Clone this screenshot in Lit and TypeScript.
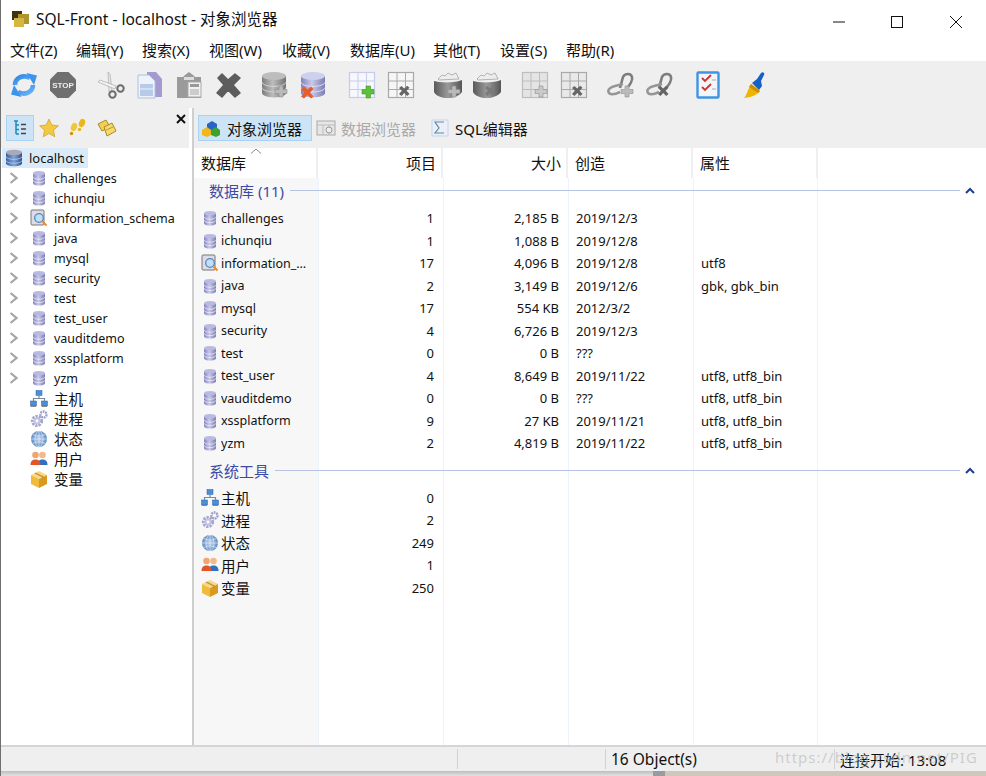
import {LitElement, html, svg, css} from 'lit';
import {customElement} from 'lit/decorators.js';

const plus = (c = '#b9b9b9') =>
  svg`<path d="M18 15h4v3.5h4v4h-4V26h-4v-3.5h-4v-4h4z" fill=${c} stroke="#8f8f8f" stroke-width=".6"/>`;
const cross = (c = '#666') =>
  svg`<path d="M12 17l2.5-2 2.7 2.6 3-2.8 2.3 2-2.9 3 2.9 3.2-2.3 2-3-3-2.7 3-2.5-2 2.9-3.2z" fill=${c}/>`;

const icon = (size: number, body: unknown, box = 28) =>
  html`<svg width=${size} height=${size} viewBox="0 0 ${box} ${box}">${body}</svg>`;

const cylinder = (fill: string, top: string, line: string) => svg`
  <path d="M1 5v17c0 2.400 5.400 4.400 12 4.400s12-2 12-4.400V5z" fill=${fill}/>
  <path d="M1 11c0 2.400 5.400 4.400 12 4.400s12-2 12-4.400M1 16.500c0 2.400 5.400 4.400 12 4.400s12-2 12-4.400" fill="none" stroke=${line} stroke-width=".9"/>
  <ellipse cx="13" cy="5" rx="12" ry="4" fill=${top}/>`;

const folderBody = svg`
  <path d="M4 8l4-4 3 1 3-3 4 2 4-2 3 6-20 1z" fill="#ededed" stroke="#999" stroke-width=".7"/>
  <path d="M0 10c6 2 22 2 28-1v12c-3 4-9 6-14 6-6 0-12-2-14-6z" fill="url(#gDark)"/>`;

const grid = (fill: string, stroke: string, extra: unknown) => svg`
  <rect x="1.500" y="1.500" width="25" height="25" fill=${fill} stroke=${stroke} stroke-width="1.200"/>
  <path d="M10 1.500v25M18.500 1.500v25M1.500 10h25M1.500 18.500h25" stroke=${stroke} stroke-width="1"/>${extra}`;

const link = (extra: unknown) => svg`
  <path d="M13 17L16 6c2-4 8-4 9 0 1 3-2 8-5 11" fill="none" stroke="#7d7d7d" stroke-width="2.600"/>
  <path d="M16 13l-8 2c-5 1-8 4-6 7 2 2 7 1 11-1" fill="none" stroke="#969696" stroke-width="2.600"/>${extra}`;

const toolbarGroups = [
  [
    icon(28, svg`
      <path d="M5 14C5 7 13 3 20 7" fill="none" stroke="url(#gBlue)" stroke-width="4.600"/>
      <path d="M16.500 2l10.500 2.500-3 9.500z" fill="#3d94ea"/>
      <path d="M23 14c0 7-8 11-15 7" fill="none" stroke="url(#gBlue)" stroke-width="4.600"/>
      <path d="M11.500 26L1 23.500l3-9.500z" fill="#3d94ea"/>`),
    icon(28, svg`
      <path d="M8.500 1h11L27 8.500v11L19.500 27h-11L1 19.500v-11z" fill="#6f6f6f"/>
      <text x="14" y="17" text-anchor="middle" font-family="Liberation Sans" font-weight="700" font-size="8" fill="#eee">STOP</text>`),
  ],
  [
    icon(28, svg`
      <path d="M11 1l2 2 2 17-3 1z" fill="#e8e8e8" stroke="#aaa" stroke-width=".7"/>
      <path d="M1 11l2-2 16 6-1 3z" fill="#f2f2f2" stroke="#aaa" stroke-width=".7"/>
      <circle cx="15.500" cy="23.500" r="3.200" fill="none" stroke="#6c6c6c" stroke-width="2"/>
      <circle cx="23.500" cy="17.500" r="3.200" fill="none" stroke="#6c6c6c" stroke-width="2"/>`),
    icon(28, svg`
      <path d="M11 1h9l6 7v18H11z" fill="#a59ad0"/>
      <path d="M2 4h11l6 6v17H2z" fill="#eef3fb" stroke="#aebfe0"/>
      <rect x="4" y="13" width="13" height="12" fill="#b7cbe9"/>
      <path d="M4 18h13" stroke="#eef3fb"/>`),
    icon(28, svg`
      <path d="M2 6h6l2-2h0l4-3 4 3 2 2h6v21H2z" fill="#9a9a9a"/>
      <path d="M9 6h10v3H9z" fill="#ddd"/>
      <rect x="13" y="11" width="13" height="15" fill="#f0f0f0" stroke="#aaa"/>
      <rect x="15" y="13" width="9" height="3" fill="#999"/>
      <rect x="15" y="18" width="9" height="6" fill="#ccc"/>`),
    icon(28, svg`
      <path d="M4 7l4-4 6 6 7-6 5 4-7 7 7 8-5 4-7-7-6 7-5-4 7-8z" fill="#5d5d5d" stroke="#5d5d5d" stroke-width="1.500" stroke-linejoin="round"/>`),
  ],
  [
    icon(28, svg`${cylinder('url(#gGrey)', '#bdbdbd', '#d8d8d8')}${plus()}`),
    icon(28, svg`${cylinder('url(#gPurple)', '#cfcfee', '#e3e3f6')}
      <path d="M1 18l3-2.500 3.500 3 3.500-3 2.500 2.500-3.500 3.500 3.500 4-2.500 2-3.500-3.500-3.500 3.500-3-2 3.500-4z" fill="#ee5a24"/>`),
  ],
  [
    icon(28, grid('#f6f7ff', '#c9cce8', svg`<path d="M18 15h4.500v3.500H26v4.500h-3.500V27H18v-4h-4v-4.500h4z" fill="#5cc13a" stroke="#3f9a25" stroke-width=".6"/>`)),
    icon(28, grid('#f6f6f6', '#a9a9a9', cross())),
  ],
  [
    icon(28, svg`${folderBody}${plus()}`),
    icon(28, svg`${folderBody}${cross('#7a7a7a')}`),
  ],
  [
    icon(28, grid('#e4e4e4', '#bdbdbd', plus('#c9c9c9'))),
    icon(28, grid('#e9e9e9', '#a9a9a9', cross())),
  ],
  [icon(28, link(plus('#bbb'))), icon(28, link(cross()))],
  [
    icon(28, svg`
      <rect x="3.500" y="1.500" width="21" height="25" rx="1" fill="#f2f6fb" stroke="#3f95e0" stroke-width="2.400"/>
      <path d="M8 7l3 3 6-6M8 16l3 3 6-6" fill="none" stroke="#d2322a" stroke-width="1.800"/>
      <path d="M18 9h4M18 18h4" stroke="#aaa"/>`),
  ],
  [
    icon(28, svg`
      <path d="M10 13l9 7c-2 3-7 6-16 7 3-3 4-9 7-14z" fill="#f0b400"/>
      <path d="M10 13l9 7-2 2-9-6z" fill="#cc8f00"/>
      <path d="M11 12l5-4 4-6c2-2 4 0 3 2l-3 6 1 5-3 4z" fill="#1560c4"/>`),
  ],
];

const dbSmall = icon(16, svg`
  <path d="M2 3.200v10c0 1.300 2.700 2.400 6 2.400s6-1.100 6-2.400v-10z" fill="url(#gPurple)"/>
  <path d="M2 6.800c0 1.300 2.700 2.400 6 2.400s6-1.100 6-2.400M2 10.200c0 1.300 2.700 2.400 6 2.400s6-1.100 6-2.400" fill="none" stroke="#eeeefa" stroke-width=".8"/>
  <ellipse cx="8" cy="3.200" rx="6" ry="2.300" fill="#b9b9e2"/>`, 16);

const schema = icon(18, svg`
  <rect x="1" y="1" width="13" height="15" rx="1" fill="#dcdce8" stroke="#777"/>
  <circle cx="9" cy="9" r="4.300" fill="#bfe0f7" stroke="#5a86b8" stroke-width="1.300"/>
  <path d="M12.500 12.500l4 4" stroke="#ef8a2c" stroke-width="2"/>`, 18);

const host = icon(18, svg`
  <rect x="6" y="0.500" width="6" height="5" fill="#4a90d9" stroke="#2a62a8" stroke-width=".5"/>
  <rect x="0.500" y="11" width="6" height="5" fill="#4a90d9" stroke="#2a62a8" stroke-width=".5"/>
  <rect x="11.500" y="11" width="6" height="5" fill="#4a90d9" stroke="#2a62a8" stroke-width=".5"/>
  <path d="M9 5.500v3M3.500 11V8.500h11V11" fill="none" stroke="#7a8a9a" stroke-width="1.200"/>
  <path d="M1 16.500h5M12 16.500h5" stroke="#888"/>`, 18);

const gears = icon(18, svg`
  <circle cx="7" cy="11" r="4.500" fill="none" stroke="#a5a5cf" stroke-width="3.200" stroke-dasharray="2.200 1"/>
  <circle cx="7" cy="11" r="3.500" fill="#c5c5e2"/>
  <circle cx="7" cy="11" r="1.400" fill="#fff"/>
  <circle cx="13.500" cy="4.500" r="3" fill="none" stroke="#9d9dc7" stroke-width="2.400" stroke-dasharray="1.800 .8"/>
  <circle cx="13.500" cy="4.500" r="1.100" fill="#fff"/>`, 18);

const globe = icon(18, svg`
  <circle cx="9" cy="9" r="8" fill="url(#gGlobe)"/>
  <path d="M1 9h16M9 1v16M3 4.500c4 2 8 2 12 0M3 13.500c4-2 8-2 12 0" fill="none" stroke="#dbe7f6" stroke-width=".7"/>
  <ellipse cx="9" cy="9" rx="4" ry="8" fill="none" stroke="#dbe7f6" stroke-width=".7"/>`, 18);

const users = icon(18, svg`
  <circle cx="12.500" cy="5" r="3.300" fill="#f3b98a"/>
  <path d="M7.500 15c0-4 2-5.500 5-5.500s5 1.500 5 5.500z" fill="#2f6fc0"/>
  <circle cx="5.500" cy="5" r="3.300" fill="#f0a670"/>
  <path d="M.5 15c0-4 2-5.500 5-5.500s5 1.500 5 5.500z" fill="#e0552a"/>`, 18);

const box = icon(18, svg`
  <path d="M1 5l8-4 8 4-8 4z" fill="#f5d88a"/>
  <path d="M1 5l8 4v9l-8-4z" fill="#eebb3c"/>
  <path d="M17 5l-8 4v9l8-4z" fill="#d99a1f"/>
  <path d="M5 3l8 4v2" fill="none" stroke="#c78f1e" stroke-width="1.300"/>`, 18);

const chevron = html`<svg class="chev" width="9" height="12" viewBox="0 0 9 12"><path d="M1.500 1L7.500 6l-6 5" fill="none" stroke="#a6a6a6" stroke-width="2.200"/></svg>`;
const collapse = html`<svg class="collapse" width="10" height="7" viewBox="0 0 10 7"><path d="M1 6l4-4 4 4" fill="none" stroke="#1c3f94" stroke-width="2"/></svg>`;

const databases = [
  ['challenges', '1', '2,185 B', '2019/12/3', ''],
  ['ichunqiu', '1', '1,088 B', '2019/12/8', ''],
  ['information_schema', '17', '4,096 B', '2019/12/8', 'utf8'],
  ['java', '2', '3,149 B', '2019/12/6', 'gbk, gbk_bin'],
  ['mysql', '17', '554 KB', '2012/3/2', ''],
  ['security', '4', '6,726 B', '2019/12/3', ''],
  ['test', '0', '0 B', '???', ''],
  ['test_user', '4', '8,649 B', '2019/11/22', 'utf8, utf8_bin'],
  ['vauditdemo', '0', '0 B', '???', 'utf8, utf8_bin'],
  ['xssplatform', '9', '27 KB', '2019/11/21', 'utf8, utf8_bin'],
  ['yzm', '2', '4,819 B', '2019/11/22', 'utf8, utf8_bin'],
];

const tools: [string, unknown, string][] = [
  ['主机', host, '0'],
  ['进程', gears, '2'],
  ['状态', globe, '249'],
  ['用户', users, '1'],
  ['变量', box, '250'],
];

const menus = ['文件(Z)', '编辑(Y)', '搜索(X)', '视图(W)', '收藏(V)', '数据库(U)', '其他(T)', '设置(S)', '帮助(R)'];

const dbIcon = (name: string) => (name === 'information_schema' ? schema : dbSmall);

@customElement('app-root')
export class AppRoot extends LitElement {
  static styles = css`
    :host {
      display: flex;
      flex-direction: column;
      height: 776px;
      width: 986px;
      box-sizing: border-box;
      border-left: 1px solid #6f6f6f;
      background: #fff;
      color: #111;
      font-family: 'Noto Sans', 'Noto Sans CJK SC', sans-serif;
      font-size: 13px;
      overflow: hidden;
      position: relative;
    }
    svg {
      display: block;
      flex: none;
    }
    .defs {
      height: 0;
      width: 0;
    }
    .titlebar {
      align-items: center;
      display: flex;
      flex: none;
      height: 37px;
      padding-left: 10px;
    }
    .title {
      font-size: 15.500px;
      margin-left: 5px;
    }
    .winctl {
      display: flex;
      margin-left: auto;
      margin-right: 1px;
      margin-top: 6px;
    }
    .winctl span {
      align-items: center;
      display: flex;
      height: 31px;
      justify-content: center;
      width: 58.500px;
    }
    .menu {
      align-items: center;
      display: flex;
      flex: none;
      font-size: 15px;
      height: 24px;
      padding-left: 9px;
    }
    .menu span {
      width: 66px;
    }
    .menu span:nth-child(3),
    .menu span:nth-child(7) {
      width: 67px;
    }
    .menu span:nth-child(4) {
      width: 73px;
    }
    .menu span:nth-child(5) {
      width: 68px;
    }
    .menu span:nth-child(6) {
      width: 83px;
    }
    .toolbar {
      align-items: center;
      background: #efefef;
      display: flex;
      flex: none;
      gap: 8.500px;
      height: 47px;
      padding-left: 3.500px;
    }
    .group {
      display: flex;
    }
    .tool {
      display: flex;
      filter: blur(0.35px);
      justify-content: center;
      width: 39px;
    }
    .main {
      display: flex;
      flex: 1;
      min-height: 0;
    }
    .left {
      display: flex;
      flex: none;
      flex-direction: column;
      font-size: 12.500px;
      width: 191px;
    }
    .strip {
      align-items: center;
      background: #efefef;
      display: flex;
      flex: none;
      height: 40px;
      margin-right: 3px;
      padding-left: 5px;
    }
    .strip-btn {
      align-items: center;
      display: flex;
      height: 26px;
      justify-content: center;
      margin-right: 1px;
      width: 28px;
    }
    .strip-btn.on,
    .tab.on {
      background: #cde4f7;
      box-shadow: inset 0 0 0 1px #a8d2f2;
    }
    .strip-close {
      align-self: flex-start;
      margin-left: auto;
      margin-right: 3px;
      margin-top: 6px;
    }
    .tree {
      flex: 1;
    }
    .root {
      align-items: center;
      background: #d9ebf9;
      display: flex;
      font-size: 13px;
      gap: 6px;
      height: 20px;
      margin-left: 1px;
      padding-left: 3px;
      width: 83px;
    }
    .node {
      align-items: center;
      display: grid;
      grid-template-columns: 28px 20px 1fr;
      height: 20px;
    }
    .chev {
      margin-left: 8px;
    }
    .node-icon {
      grid-column: 2;
      justify-self: center;
    }
    .node-label {
      grid-column: 3;
      padding-left: 5px;
      white-space: nowrap;
    }
    .cjk {
      font-size: 14.500px;
    }
    .splitter {
      background: #fff;
      border-left: 2px solid #cfcfcf;
      flex: none;
      width: 0;
    }
    .right {
      display: flex;
      flex: 1;
      flex-direction: column;
      min-width: 0;
    }
    .tabs {
      align-items: center;
      background: #efefef;
      display: flex;
      flex: none;
      font-size: 15px;
      height: 40px;
      padding-left: 4px;
    }
    .tab {
      align-items: center;
      display: flex;
      gap: 5px;
      height: 26px;
      padding: 0 8px 0 3px;
    }
    .tab.on {
      box-sizing: border-box;
      gap: 6px;
      margin-right: 1px;
      width: 114px;
    }
    .tab.off {
      color: #a9a9a9;
      margin-right: 3px;
    }
    .head,
    .row {
      display: grid;
      grid-template-columns: 124px 125px 125px 125px 125px 1fr;
    }
    .head {
      align-items: center;
      flex: none;
      font-size: 15px;
      height: 30px;
    }
    .head div {
      border-right: 2px solid #efefef;
      box-sizing: border-box;
      height: 100%;
      line-height: 30px;
      padding: 0 5px 0 7px;
      position: relative;
    }
    .head div:last-child {
      border-right: none;
    }
    .sort {
      left: 56px;
      position: absolute;
      top: 0;
    }
    .num {
      padding-right: 9px;
      text-align: right;
    }
    .head .num {
      padding-right: 5px;
    }
    .body {
      background:
        linear-gradient(90deg, #f7f7f7 124px, transparent 124px),
        linear-gradient(90deg, transparent 124px, #edf3fb 124px, #edf3fb 125px, transparent 125px),
        linear-gradient(90deg, transparent 249px, #edf3fb 249px, #edf3fb 250px, transparent 250px),
        linear-gradient(90deg, transparent 374px, #edf3fb 374px, #edf3fb 375px, transparent 375px),
        linear-gradient(90deg, transparent 499px, #edf3fb 499px, #edf3fb 500px, transparent 500px),
        linear-gradient(90deg, transparent 623px, #edf3fb 623px, #edf3fb 624px, transparent 624px);
      flex: 1;
      min-height: 0;
      overflow: hidden;
    }
    .band {
      align-items: center;
      color: #3d4ba6;
      display: flex;
      font-size: 15px;
      height: 24px;
      padding-left: 15px;
    }
    .band-line {
      background: #b4c4e2;
      flex: 1;
      height: 1px;
      margin: 0 5px 0 6px;
    }
    .collapse {
      margin-right: 11px;
    }
    .rows {
      padding-bottom: 4px;
      padding-top: 5px;
    }
    .rows.sys {
      padding-top: 4px;
    }
    .row {
      align-items: center;
      height: 22.500px;
      white-space: nowrap;
    }
    .cell {
      min-width: 0;
    }
    .name {
      align-items: center;
      display: flex;
      font-size: 12.500px;
      padding-left: 6px;
    }
    .name-icon {
      align-items: center;
      display: flex;
      flex: none;
      justify-content: center;
      margin-right: 1px;
      width: 20px;
    }
    .name span {
      overflow: hidden;
      padding-right: 6px;
      text-overflow: ellipsis;
    }
    .date,
    .attr {
      padding-left: 8px;
    }
    .status {
      background: #efefef;
      border-top: 2px solid #d5d5d5;
      display: flex;
      flex: none;
      font-size: 15.500px;
      height: 24px;
      position: relative;
    }
    .cell-s {
      align-items: center;
      border-right: 1px solid #d2d2d2;
      box-sizing: border-box;
      display: flex;
      margin: 2px 0;
      padding-left: 5px;
    }
    .cell-s.w1 {
      width: 457px;
    }
    .cell-s.w2 {
      width: 148px;
    }
    .cell-s.w3 {
      width: 229px;
    }
    .cell-s.conn {
      border-right: none;
      font-size: 15px;
    }
    .watermark {
      color: rgba(190, 190, 190, 0.7);
      font-size: 15px;
      left: 774px;
      letter-spacing: 1px;
      position: absolute;
      top: 0;
      white-space: nowrap;
    }
    .shadow {
      display: flex;
      flex: none;
      height: 5px;
    }
    .shadow i {
      display: block;
    }
    .shadow .a {
      background: linear-gradient(#bdbdbd, #e2e2e2);
      width: 652px;
    }
    .shadow .b {
      background: #9b9b9b;
      width: 12px;
    }
    .shadow .c {
      background: #cfc8ba;
      flex: 1;
    }
  `;

  render() {
    return html`
      <svg class="defs">
        <defs>
          <linearGradient id="gPurple"><stop offset="0" stop-color="#8383bd"/><stop offset=".45" stop-color="#c9c9ea"/><stop offset="1" stop-color="#7c7cb2"/></linearGradient>
          <linearGradient id="gGrey"><stop offset="0" stop-color="#7d7d7d"/><stop offset=".45" stop-color="#bcbcbc"/><stop offset="1" stop-color="#727272"/></linearGradient>
          <linearGradient id="gDark"><stop offset="0" stop-color="#5a5a5a"/><stop offset=".5" stop-color="#9a9a9a"/><stop offset="1" stop-color="#555"/></linearGradient>
          <linearGradient id="gBlue" x2="1" y2="1"><stop offset="0" stop-color="#2f86e6"/><stop offset="1" stop-color="#6db7f5"/></linearGradient>
          <radialGradient id="gGlobe"><stop offset="0" stop-color="#c2d6ee"/><stop offset="1" stop-color="#5e8dc6"/></radialGradient>
          <linearGradient id="gDbBlue"><stop offset="0" stop-color="#3b5f9e"/><stop offset=".5" stop-color="#7fa4d8"/><stop offset="1" stop-color="#2f4f88"/></linearGradient>
        </defs>
      </svg>
      <div class="titlebar">
        ${icon(20, svg`
          <rect x="1" y="2" width="10" height="9" fill="#3f3410"/>
          <rect x="7" y="5" width="11" height="10" fill="#b0952b"/>
          <rect x="3" y="9" width="10" height="9" fill="#d4b640"/>`, 20)}
        <span class="title">SQL-Front - localhost - 对象浏览器</span>
        <div class="winctl">
          <span><svg width="12" height="2" viewBox="0 0 12 2"><path d="M0 1h12" stroke="#111"/></svg></span>
          <span><svg width="12" height="12" viewBox="0 0 12 12"><rect x=".5" y=".5" width="11" height="11" fill="none" stroke="#111"/></svg></span>
          <span><svg width="12" height="12" viewBox="0 0 12 12"><path d="M0 0l12 12M12 0L0 12" stroke="#111"/></svg></span>
        </div>
      </div>
      <div class="menu">${menus.map(m => html`<span>${m}</span>`)}</div>
      <div class="toolbar">
        ${toolbarGroups.map(
          g => html`<div class="group">${g.map(i => html`<div class="tool">${i}</div>`)}</div>`
        )}
      </div>
      <div class="main">
        <div class="left">
          <div class="strip">
            <div class="strip-btn on">
              ${icon(18, svg`<path d="M3 2h4M5 2v13M5 6h3M5 10.500h3M5 15h3" fill="none" stroke="#1f8bb8" stroke-width="1.500"/><path d="M10 5.500h5M10 10h5M10 14.500h5" stroke="#444" stroke-width="1.500"/>`, 18)}
            </div>
            <div class="strip-btn">
              ${icon(20, svg`<path d="M10 1l2.800 6 6.600.8-4.900 4.500 1.300 6.500L10 15.500 4.200 18.800l1.300-6.500L.6 7.800 7.200 7z" fill="#f5c842" stroke="#c9a227" stroke-width=".7"/>`, 20)}
            </div>
            <div class="strip-btn">
              ${icon(20, svg`<ellipse cx="14" cy="5" rx="3" ry="4.200" fill="#e8b61e" transform="rotate(20 14 5)"/><circle cx="11.500" cy="11.500" r="1.700" fill="#e8b61e"/><ellipse cx="6" cy="9" rx="3" ry="4.200" fill="#f0c63a" transform="rotate(20 6 9)"/><circle cx="3.500" cy="15.500" r="1.700" fill="#c9960f"/>`, 20)}
            </div>
            <div class="strip-btn">
              ${icon(20, svg`<path d="M1 6l8-4 4 7-8 4z" fill="#f2cf56" stroke="#a37f14" stroke-width=".9"/><path d="M7 9l8-4 4 8-9 5z" fill="#f7da6e" stroke="#a37f14" stroke-width=".9"/><path d="M9 12l7-3" stroke="#a37f14" stroke-width=".7"/>`, 20)}
            </div>
            <svg class="strip-close" width="10" height="10" viewBox="0 0 10 10"><path d="M1 1l8 8M9 1l-8 8" stroke="#111" stroke-width="2"/></svg>
          </div>
          <div class="tree">
            <div class="root">
              ${icon(18, svg`
                <path d="M1 3.500v11c0 1.500 3.600 2.800 8 2.800s8-1.300 8-2.800v-11z" fill="url(#gDbBlue)"/>
                <path d="M1 7.500c0 1.500 3.600 2.800 8 2.800s8-1.300 8-2.800M1 11.500c0 1.500 3.600 2.800 8 2.800s8-1.300 8-2.800" fill="none" stroke="#bcd3f0" stroke-width=".8"/>
                <ellipse cx="9" cy="3.500" rx="8" ry="2.700" fill="#a9a9b8"/>`, 18)}
              <span>localhost</span>
            </div>
            ${databases.map(
              d => html`<div class="node">
                ${chevron}
                <div class="node-icon">${dbIcon(d[0])}</div>
                <div class="node-label">${d[0]}</div>
              </div>`
            )}
            ${tools.map(
              t => html`<div class="node">
                <div class="node-icon">${t[1]}</div>
                <div class="node-label cjk">${t[0]}</div>
              </div>`
            )}
          </div>
        </div>
        <div class="splitter"></div>
        <div class="right">
          <div class="tabs">
            <div class="tab on">
              ${icon(20, svg`
                <path d="M6 6l5-3 5 3v5l-5 3-5-3z" fill="#2a63c6"/>
                <path d="M1 12l5-3 4 3v5l-4 2-5-2z" fill="#edb71d"/>
                <path d="M10 12l5-3 4 3v5l-4 2-5-2z" fill="#3ba32c"/>`, 20)}
              <span>对象浏览器</span>
            </div>
            <div class="tab off">
              ${icon(20, svg`<rect x="1" y="3" width="18" height="14" fill="#e6e6e6" stroke="#a9a9a9"/><path d="M1 7h18M7 7v10M13 7v10" stroke="#bdbdbd"/><circle cx="13" cy="12" r="3" fill="#eee" stroke="#999"/>`, 20)}
              <span>数据浏览器</span>
            </div>
            <div class="tab">
              ${icon(20, svg`<rect x="2" y="2" width="16" height="16" fill="#e9f0fa" stroke="#c9d5e8"/><path d="M14 4H5l4 6-4 5h9" fill="none" stroke="#68889f" stroke-width="1.200"/>`, 20)}
              <span>SQL编辑器</span>
            </div>
          </div>
          <div class="head">
            <div>
              数据库
              <svg class="sort" width="12" height="6" viewBox="0 0 12 6"><path d="M1 5.500l5-4.500 5 4.500" fill="none" stroke="#8a8a8a"/></svg>
            </div>
            <div class="num">项目</div>
            <div class="num">大小</div>
            <div>创造</div>
            <div>属性</div>
            <div></div>
          </div>
          <div class="body">
            <div class="band"><span>数据库 (11)</span><i class="band-line"></i>${collapse}</div>
            <div class="rows">
              ${databases.map(
                d => html`<div class="row">
                  <div class="cell name"><div class="name-icon">${dbIcon(d[0])}</div><span>${d[0]}</span></div>
                  <div class="cell num">${d[1]}</div>
                  <div class="cell num">${d[2]}</div>
                  <div class="cell date">${d[3]}</div>
                  <div class="cell attr">${d[4]}</div>
                </div>`
              )}
            </div>
            <div class="band"><span>系统工具</span><i class="band-line"></i>${collapse}</div>
            <div class="rows sys">
              ${tools.map(
                t => html`<div class="row">
                  <div class="cell name"><div class="name-icon">${t[1]}</div><span class="cjk">${t[0]}</span></div>
                  <div class="cell num">${t[2]}</div>
                </div>`
              )}
            </div>
          </div>
        </div>
      </div>
      <div class="status">
        <div class="cell-s w1"></div>
        <div class="cell-s w2"></div>
        <div class="cell-s w3">16 Object(s)</div>
        <div class="cell-s conn">连接开始: 13:08</div>
        <span class="watermark">https://blog.csdn.net/PIG</span>
      </div>
      <div class="shadow"><i class="a"></i><i class="b"></i><i class="c"></i></div>
    `;
  }
}
